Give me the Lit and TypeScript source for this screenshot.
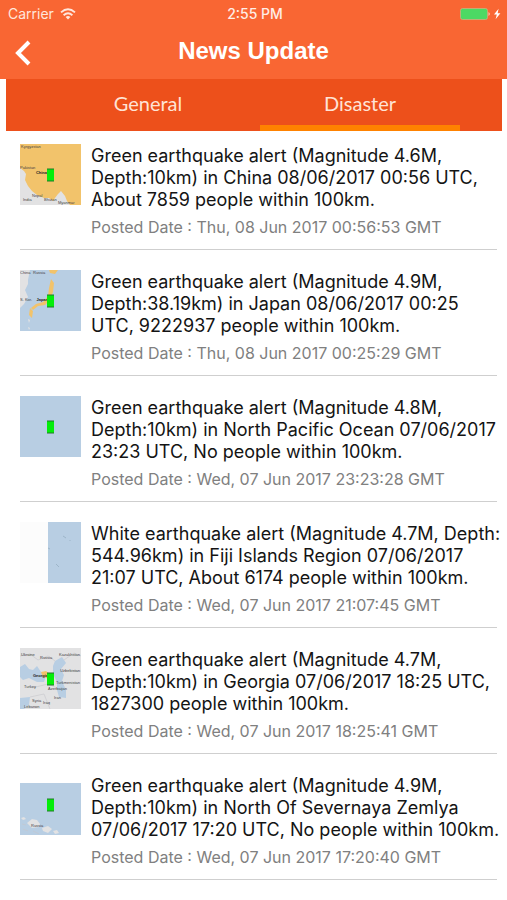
import { LitElement, html, css, svg } from "lit";
import { customElement, property, state } from "lit/decorators.js";
import { classMap } from "lit/directives/class-map.js";

interface NewsItem {
  map: string;
  lines: string[];
  date: string;
}

const items: NewsItem[] = [
  { map: "china", lines: ["Green earthquake alert (Magnitude 4.6M,", "Depth:10km) in China 08/06/2017 00:56 UTC,", "About 7859 people within 100km."], date: "Thu, 08 Jun 2017 00:56:53 GMT" },
  { map: "japan", lines: ["Green earthquake alert (Magnitude 4.9M,", "Depth:38.19km) in Japan 08/06/2017 00:25", "UTC, 9222937 people within 100km."], date: "Thu, 08 Jun 2017 00:25:29 GMT" },
  { map: "pacific", lines: ["Green earthquake alert (Magnitude 4.8M,", "Depth:10km) in North Pacific Ocean 07/06/2017", "23:23 UTC, No people within 100km."], date: "Wed, 07 Jun 2017 23:23:28 GMT" },
  { map: "fiji", lines: ["White earthquake alert (Magnitude 4.7M, Depth:", "544.96km) in Fiji Islands Region 07/06/2017", "21:07 UTC, About 6174 people within 100km."], date: "Wed, 07 Jun 2017 21:07:45 GMT" },
  { map: "georgia", lines: ["Green earthquake alert (Magnitude 4.7M,", "Depth:10km) in Georgia 07/06/2017 18:25 UTC,", "1827300 people within 100km."], date: "Wed, 07 Jun 2017 18:25:41 GMT" },
  { map: "severnaya", lines: ["Green earthquake alert (Magnitude 4.9M,", "Depth:10km) in North Of Severnaya Zemlya", "07/06/2017 17:20 UTC, No people within 100km."], date: "Wed, 07 Jun 2017 17:20:40 GMT" },
];

const marker = svg`<path class="pin" d="M27 25h7v12h-7z"/><path class="pin-edge" d="M27 25h7M27 37h7"/>`;

const maps: Record<string, unknown> = {
  china: svg`
    <rect class="quake" width="61" height="61"/>
    <path class="land" d="M0 24L4 27 6 30 5 36 8 42 12 47 17 51 24 54 29 54 33 57 35 54 38 50 41 47 45 52 47 57 50 61H0z"/>
    <text x="1" y="4">Kyrgyzstan</text><text x="0" y="25">Pakistan</text><text x="27" y="30" class="strong end">China</text>
    <text x="3" y="57">India</text><text x="12" y="53">Nepal</text><text x="24" y="57">Bhutan</text><text x="38" y="60">Myanmar</text>
    ${marker}`,
  japan: svg`
    <rect class="sea" width="61" height="61"/>
    <path class="land" d="M0 0H10L9 5 8 10 8 14 5 20 8 27 4 34 0 38z"/>
    <path class="quake" d="M29 0h9l-3 4-5-1zM31 9l3 4-1 9-3 8-5 5-7 1-5 4-2-2 5-4 7-2 5-6 1-8zM10 38l3 3-1 7-3-3z"/>
    <path class="land" d="M8 49l2 1-1 3zM8 57l2 1-1 2z"/>
    <text x="0" y="4">China</text><text x="13" y="4">Russia</text><text x="0" y="31">S. Kor.</text><text x="28" y="31" class="strong end">Japan</text>
    ${marker}`,
  pacific: svg`<rect class="sea" width="61" height="61"/>${marker}`,
  fiji: svg`
    <rect class="blank" width="28" height="61"/><rect class="sea" x="28" width="33" height="61"/>
    <path class="isle" d="M43 14l3 2M28 26l2 1M36 42l3 3M50 18v1"/>`,
  georgia: svg`
    <rect class="land" width="61" height="61"/>
    <path class="sea" d="M0 19L5 16 9 21 13 22 17 18 21 24 26 28 24 34 17 34 9 30 3 32 0 29zM35 13L42 9 46 15 41 21 44 27 42 33 46 42 46 50 39 49 37 42 37 34 33 26 33 18zM0 50l10-1-1 8-5 4H0z"/>
    <path class="border" d="M0 8L10 6 18 12 28 8 35 13M43 22L61 23M44 12L54 5 61 8M12 40L28 36 37 40M10 49L24 46 30 61"/>
    <path class="quake" d="M21 24l5-1 5 4-2 4-6-2z"/>
    <text x="1" y="8">Ukraine</text><text x="20" y="11">Russia</text><text x="60" y="8" class="end">Kazakhstan</text><text x="60" y="24" class="end">Uzbekistan</text>
    <text x="28" y="29" class="strong end">Georgia</text><text x="4" y="40">Turkey</text><text x="60" y="36" class="end">Turkmenistan</text>
    <text x="28" y="42">Azerbaijan</text><text x="12" y="54">Syria</text><text x="23" y="56">Iraq</text><text x="34" y="51">Iran</text><text x="4" y="60">Lebanon</text>
    ${marker}`,
  severnaya: svg`
    <rect class="sea" y="9" width="61" height="52"/>
    <path class="land" d="M1 44l3-1 2 2-3 1zM7 49l5-4 5 1 3 4-1 3-7 1zM22 54l6-2 4 3-4 4-5-2zM33 57l4-1 2 3-4 1z"/>
    <path class="border" d="M2 50l4 1M3 55l5 2M13 57l6 3"/>
    <text x="11" y="53">Russia</text>${marker}`,
};

@customElement("quake-map")
export class QuakeMap extends LitElement {
  @property() name = "pacific";

  static styles = css`
    :host { display: block; }
    svg { display: block; width: 61px; height: 61px; }
    text { font: 4px "Liberation Sans", Arial, sans-serif; fill: #444; }
    .strong { font-weight: 700; fill: #222; }
    .end { text-anchor: end; }
    .sea { fill: #b8cee3; }
    .land { fill: #e2e2e3; }
    .quake { fill: #f2c36b; }
    .blank { fill: #fcfcfc; }
    .pin { fill: #04ee0a; }
    .pin-edge { stroke: #23772b; stroke-width: 1; }
    .isle { fill: none; stroke: #91aabd; stroke-width: 0.7; }
    .border { fill: none; stroke: #c6c6cb; stroke-width: 0.6; }
  `;

  render() {
    return html`<svg viewBox="0 0 61 61" aria-hidden="true">${maps[this.name]}</svg>`;
  }
}

@customElement("app-root")
export class AppRoot extends LitElement {
  @state() private tab = "Disaster";

  static styles = css`
    :host {
      display: block;
      min-height: 100vh;
      background: #fff;
      color: #141414;
      font-family: Inter, "Liberation Sans", sans-serif;
    }
    .top { background: #f96633; color: #fff; }
    .status {
      display: grid;
      grid-template-columns: 1fr auto 1fr;
      align-items: center;
      height: 27px;
      padding: 0 5px 0 8px;
      font-size: 14px;
    }
    .carrier { display: flex; align-items: center; gap: 6px; color: #ffe6dc; }
    .clock { font-size: 14px; font-weight: 500; color: #ffeee6; }
    .battery { justify-self: end; display: block; }
    .nav {
      display: grid;
      grid-template-columns: 48px 1fr 48px;
      align-items: start;
      height: 52px;
    }
    .back {
      display: flex;
      align-items: center;
      height: 52px;
      padding: 0 0 0 14px;
      border: 0;
      background: none;
      color: inherit;
    }
    h1 {
      margin: 0;
      text-align: center;
      font: 700 24px/48px "Liberation Sans", Arial, sans-serif;
    }
    .tabs {
      display: flex;
      justify-content: center;
      gap: 12px;
      height: 52px;
      margin: 0 5px 0 6px;
      background: #ed501b;
    }
    .tab {
      flex: 0 1 200px;
      padding: 2px 0 0;
      border: 0;
      border-bottom: 6px solid transparent;
      background: none;
      color: #ffe3d5;
      font: 20px/40px Lato, sans-serif;
    }
    .tab.active { border-bottom-color: #ff8200; }
    .list {
      display: flex;
      flex-direction: column;
      gap: 20px;
      margin: 0;
      padding: 13px 10px 18px 20px;
      list-style: none;
    }
    .item {
      display: flex;
      gap: 10px;
      padding-bottom: 12px;
      border-bottom: 1px solid #cfcfcf;
    }
    .body { flex: 1; min-width: 0; padding-top: 1px; }
    .title { margin: 0 0 6px; font-size: 18px; line-height: 22px; font-weight: 400; }
    .line { display: block; white-space: nowrap; }
    .date { margin: 0; font-size: 16px; line-height: 20px; color: #808080; }
  `;

  render() {
    return html`
      <header class="top">
        <div class="status">
          <span class="carrier">Carrier
            <svg width="16" height="12" viewBox="0 0 16 12" fill="none" stroke="currentColor" stroke-width="1.9" aria-hidden="true">
              <path d="M1 4.4Q8-1.8 15 4.4M3.6 7.2Q8 3.4 12.4 7.2"/>
              <path d="M5.6 8.9Q8 7 10.4 8.9L8 11.6z" fill="currentColor" stroke="none"/>
            </svg>
          </span>
          <span class="clock">2:55 PM</span>
          <svg class="battery" width="43" height="14" viewBox="0 0 43 14" aria-hidden="true">
            <rect x="1.5" y="1.5" width="27" height="11" rx="2" fill="#4cd964" stroke="#c9b080" stroke-width="0.8"/>
            <path d="M29.6 5Q31.6 7 29.6 9z" fill="#ffe6dc"/>
            <path d="M39.6 1.8L35 7.6h2.8L36.6 12.2 41.4 6.2H38.6z" fill="#fff"/>
          </svg>
        </div>
        <div class="nav">
          <button class="back" aria-label="Back">
            <svg width="18" height="26" viewBox="0 0 18 26" fill="none" stroke="currentColor" stroke-width="4" aria-hidden="true">
              <path d="M15 2L4 13 15 24"/>
            </svg>
          </button>
          <h1>News Update</h1>
        </div>
      </header>
      <nav class="tabs" role="tablist">
        ${["General", "Disaster"].map(
          (t) => html`<button
            role="tab"
            aria-selected=${this.tab === t}
            class=${classMap({ tab: true, active: this.tab === t })}
            @click=${() => (this.tab = t)}
          >${t}</button>`
        )}
      </nav>
      <ul class="list">
        ${items.map(
          (n) => html`<li class="item">
            <quake-map name=${n.map}></quake-map>
            <div class="body">
              <h2 class="title">${n.lines.map((l) => html`<span class="line">${l}</span>`)}</h2>
              <p class="date">Posted Date : ${n.date}</p>
            </div>
          </li>`
        )}
      </ul>
    `;
  }
}
